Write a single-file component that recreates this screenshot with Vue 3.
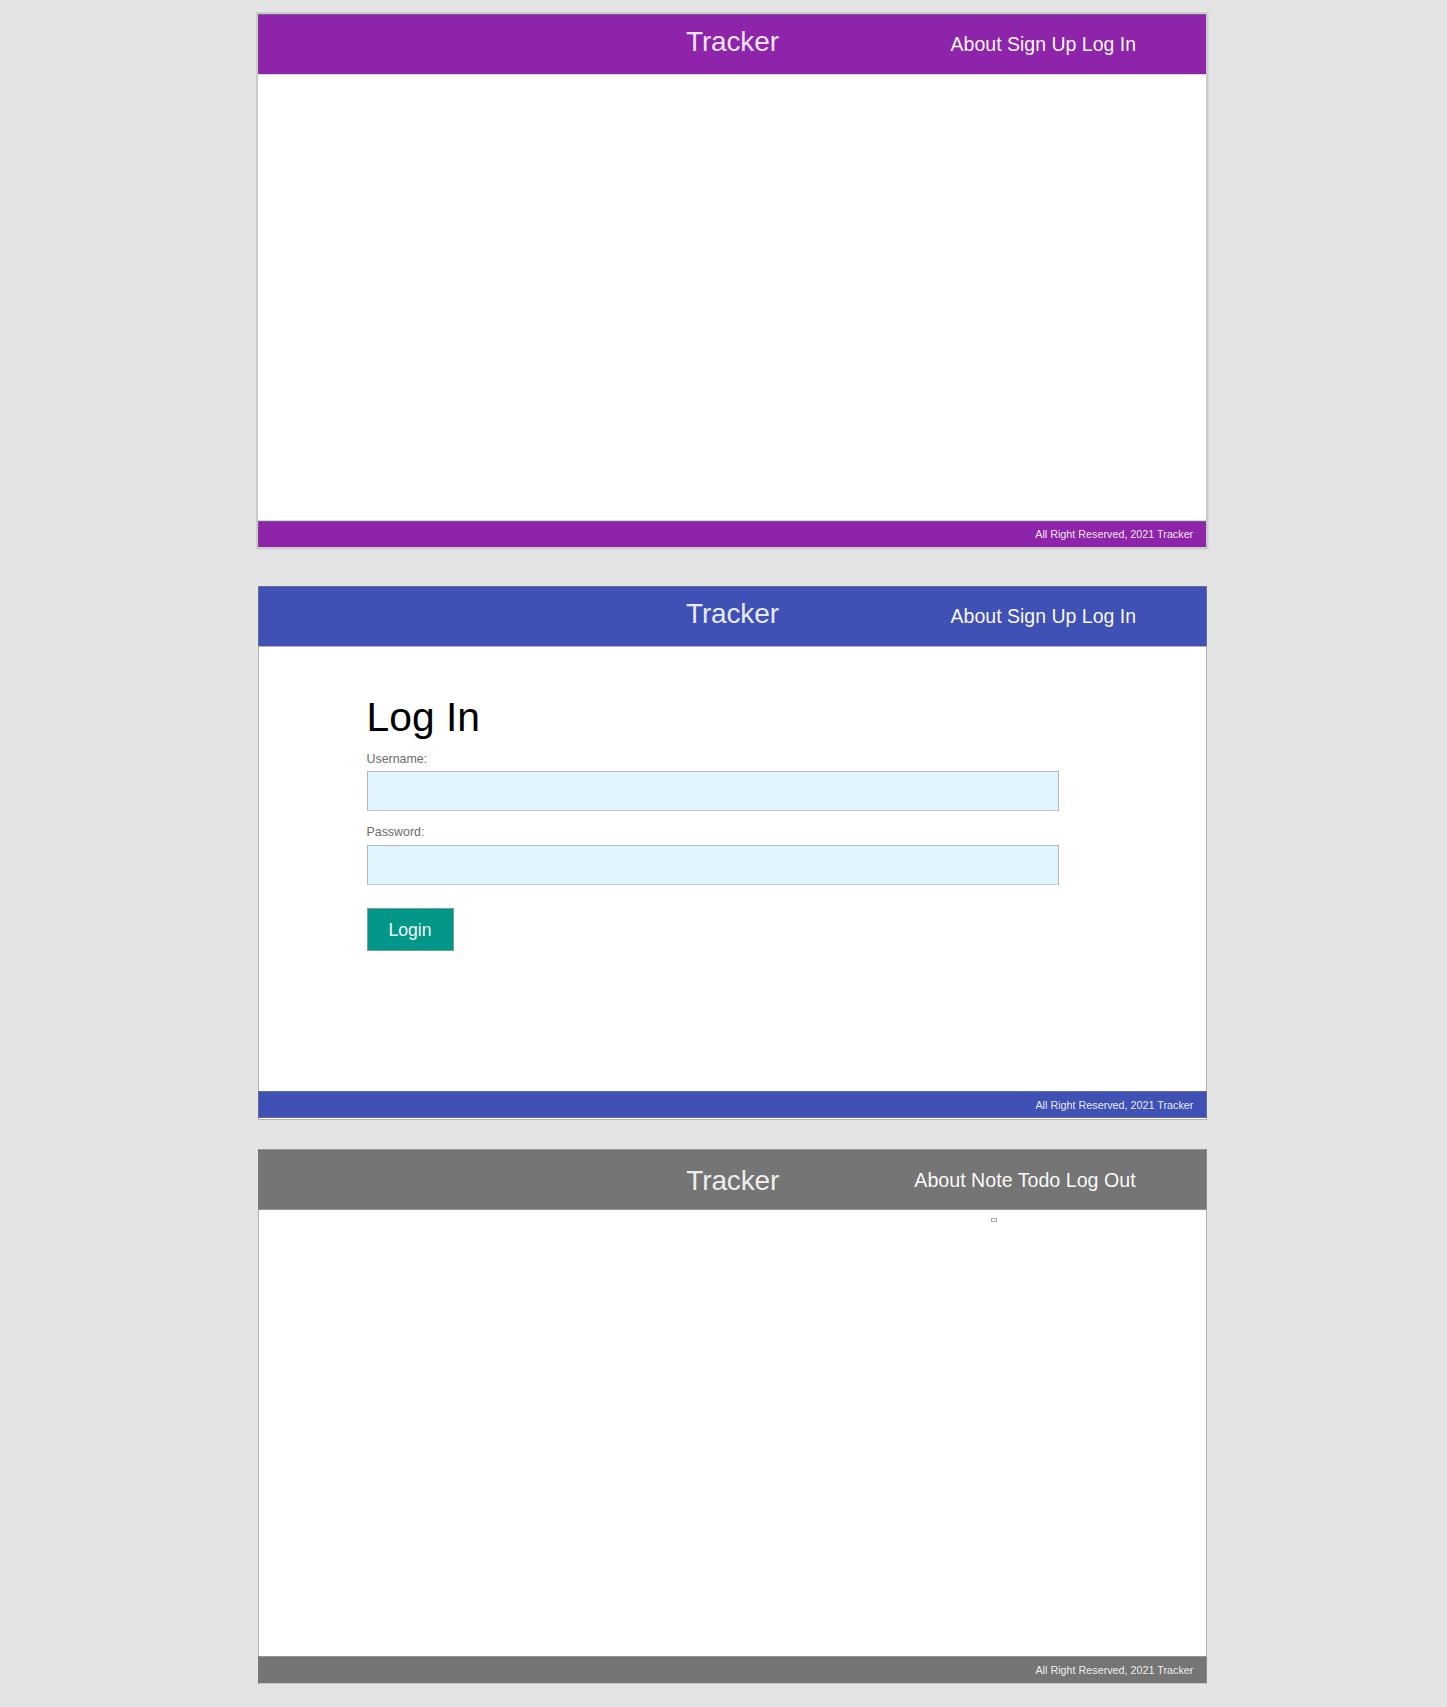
<script setup>
const homeLinks = ['About', 'Sign Up', 'Log In']
const userLinks = ['About', 'Note', 'Todo', 'Log Out']
const copyright = 'All Right Reserved, 2021 Tracker'
</script>

<template>
  <main class="board">
    <section class="screen home">
      <header class="bar">
        <h1 class="brand">Tracker</h1>
        <nav class="links"><template v-for="l in homeLinks" :key="l"><a>{{ l }}</a>{{ ' ' }}</template></nav>
      </header>
      <div class="body"></div>
      <footer class="foot">{{ copyright }}</footer>
    </section>

    <section class="screen login">
      <header class="bar">
        <h1 class="brand">Tracker</h1>
        <nav class="links"><template v-for="l in homeLinks" :key="l"><a>{{ l }}</a>{{ ' ' }}</template></nav>
      </header>
      <form class="body form" @submit.prevent>
        <h2 class="title">Log In</h2>
        <label class="label" for="username">Username:</label>
        <input id="username" class="field" type="text" />
        <label class="label second" for="password">Password:</label>
        <input id="password" class="field" type="password" />
        <button class="submit" type="submit">Login</button>
      </form>
      <footer class="foot">{{ copyright }}</footer>
    </section>

    <section class="screen member">
      <header class="bar">
        <h1 class="brand">Tracker</h1>
        <nav class="links"><template v-for="l in userLinks" :key="l"><a>{{ l }}</a>{{ ' ' }}</template></nav>
      </header>
      <div class="body"><div class="marker"></div></div>
      <footer class="foot">{{ copyright }}</footer>
    </section>
  </main>
</template>

<style>
body {
  margin: 0;
  background: #e4e4e4;
}
</style>

<style scoped>
* {
  box-sizing: border-box;
}
.board {
  height: 1707px;
  padding: 12px 0 0 256px;
  background: #e4e4e4;
  font-family: "Liberation Sans", Arial, sans-serif;
  overflow: hidden;
}
.screen {
  width: 949px;
  margin-left: 2px;
  display: flex;
  flex-direction: column;
}
.bar {
  flex: none;
  height: 60px;
  display: flex;
  align-items: flex-start;
  border: 1px solid;
  color: #fff;
}
.brand {
  width: 264.6px;
  margin: 7px 0 0 427px;
  font-size: 28px;
  font-weight: 400;
  line-height: 40px;
  letter-spacing: -0.15px;
  color: rgba(255, 255, 255, 0.9);
}
.links {
  font-size: 19.5px;
  line-height: 30px;
  margin-top: 14px;
  white-space: nowrap;
  color: rgba(255, 255, 255, 0.97);
}
.body {
  flex: 1;
  background: #fff;
  border: solid #b3b3b3;
  border-width: 1px 1px 0;
}
.foot {
  flex: none;
  border: 1px solid;
  padding-right: 12.6px;
  font-size: 10.78px;
  line-height: 24px;
  text-align: right;
  color: rgba(255, 255, 255, 0.9);
}

.home {
  width: 952px;
  height: 537px;
  margin-left: 0;
  border: 2px solid #cbcbcb;
  box-shadow: 0 1px 0 #dadada, 1px 0 0 #dadada;
}
.home .bar,
.home .foot {
  background: #8e24aa;
  border-color: #7f5490 #8e24aa #8e24aa #7f4a91;
}
.home .body {
  border-width: 1px 0;
  border-color: #d8d8d8;
}
.home .foot {
  height: 26px;
  padding-right: 11.8px;
}

.login {
  height: 534px;
  margin-top: 37px;
}
.login .bar,
.login .foot {
  background: #3f51b5;
  border-color: #666c90;
}
.login .bar {
  border-bottom: 0;
}
.login .foot {
  height: 27px;
  line-height: 26px;
}
.login::after {
  content: "";
  height: 1px;
  background: #fff;
  border: solid #b3b3b3;
  border-width: 0 1px 1px;
}

.member {
  height: 535px;
  margin-top: 29px;
}
.member .bar,
.member .foot {
  background: #757575;
  border-color: #959595 #8c8c8c #929292 #757575;
}
.member .bar {
  height: 61px;
}
.member .body {
  border-top: 0;
}
.member .brand {
  width: 228px;
  margin-top: 11px;
  margin-left: 427.3px;
}
.member .links {
  margin-top: 15px;
  font-size: 19.65px;
}
.member .foot {
  height: 28px;
  line-height: 26px;
  border-bottom-color: #c4c4c4;
}
.marker {
  width: 6px;
  height: 4px;
  margin: 8px 0 0 732px;
  border: 1px solid #aaa;
}

.form {
  display: flex;
  flex-direction: column;
  align-items: flex-start;
  padding-left: 108px;
}
.title {
  margin: 46px 0 0 -0.5px;
  font-size: 40.8px;
  font-weight: 400;
  line-height: 48px;
  color: #000;
}
.label {
  margin: 8px 0 0 -0.5px;
  height: 22px;
  font-size: 12.4px;
  line-height: 20px;
  color: #6c6c6c;
}
.field {
  width: 692px;
  height: 40px;
  padding: 0 8px;
  border: 1px solid #b3b8bb;
  border-bottom-color: #c6c9cb;
  border-radius: 0;
  background: #e1f5fe;
  outline: none;
}
.label.second {
  margin-top: 11px;
  margin-bottom: 1px;
}
.submit {
  width: 87px;
  height: 43px;
  margin-top: 23px;
  padding: 2px 1px 0 0;
  border: 1px solid #7b9e99;
  border-radius: 0;
  background: #009688;
  font-family: inherit;
  font-size: 17.6px;
  line-height: 39px;
  color: #f3fafa;
}
</style>
